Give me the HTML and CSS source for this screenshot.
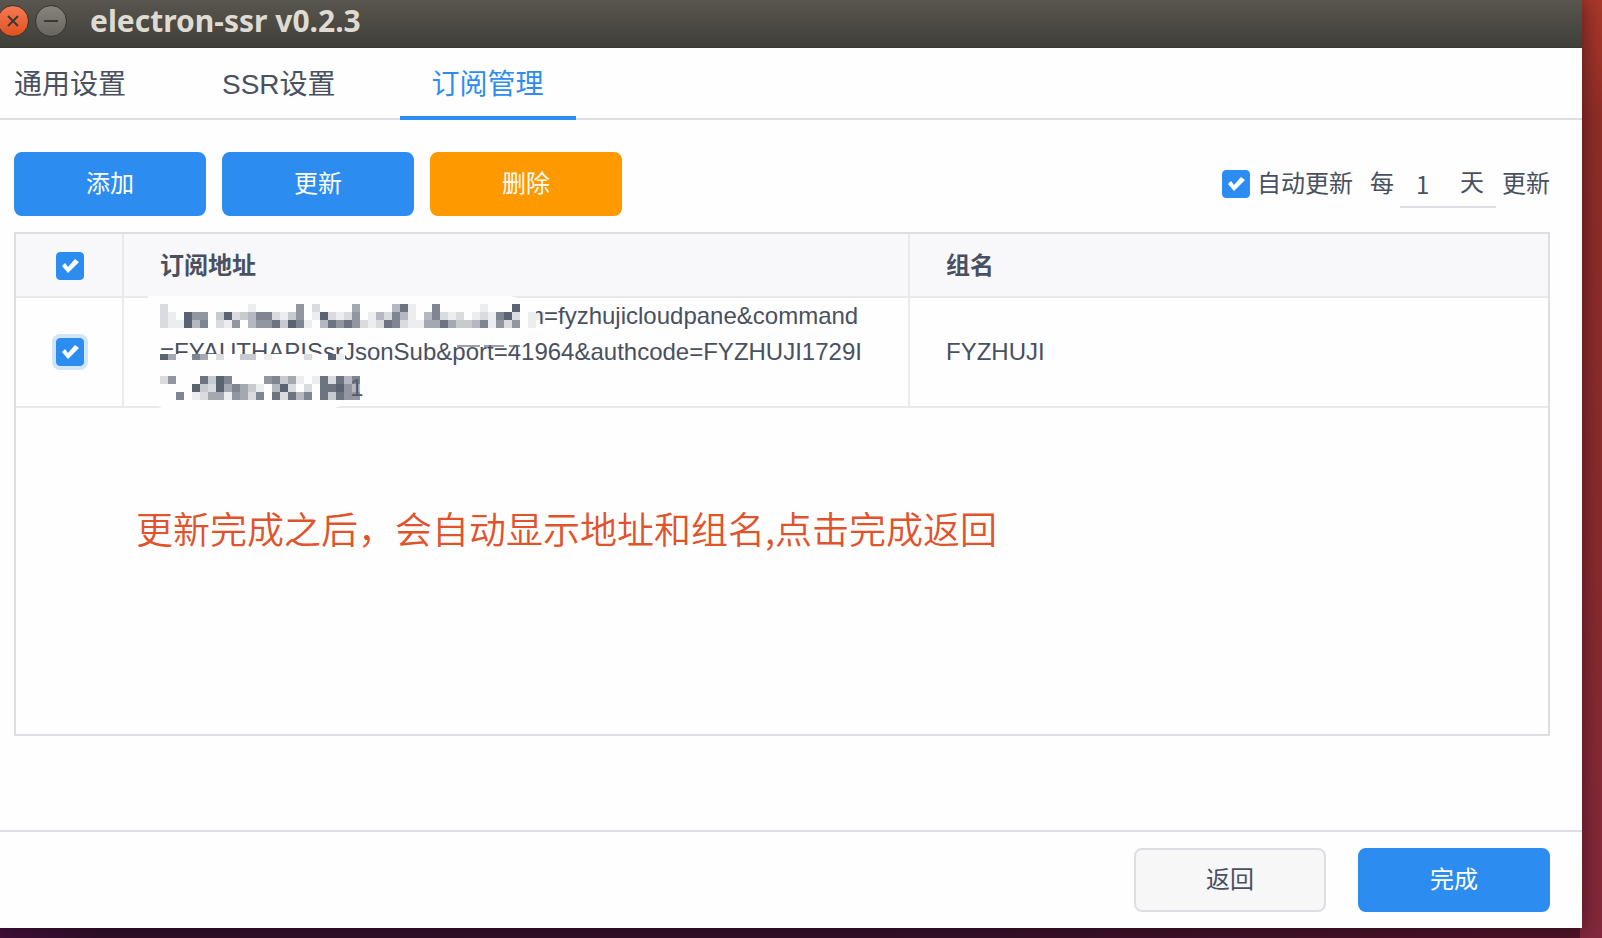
FILE: index.html
```html
<!DOCTYPE html>
<html lang="zh-CN">
<head>
    <meta charset="UTF-8">
    <meta name="viewport" content="width=device-width, initial-scale=1.0">
    <title>electron-ssr v0.2.3</title>
    <link rel="stylesheet" href="styles.css">
</head>
<body>

    <div class="window">
        <!-- Title Bar -->
        <header class="titlebar">
            <button class="control close" type="button" aria-label="关闭">
                <svg width="30" height="30" viewBox="0 0 30 30"><path d="M10 10 L20 20 M20 10 L10 20"/></svg>
            </button>
            <button class="control minimize" type="button" aria-label="最小化">
                <svg width="30" height="30" viewBox="0 0 30 30"><path d="M8 15 H22"/></svg>
            </button>
            <h1>electron-ssr v0.2.3</h1>
        </header>

        <!-- Tabs -->
        <nav class="tabs">
            <button class="tab" type="button">通用设置</button>
            <button class="tab" type="button">SSR设置</button>
            <button class="tab active" type="button">订阅管理</button>
        </nav>

        <!-- Subscriptions -->
        <main>
            <div class="toolbar">
                <button class="button primary" type="button">添加</button>
                <button class="button primary" type="button">更新</button>
                <button class="button warning" type="button">删除</button>
                <div class="auto-update">
                    <label class="auto-label"><input class="checkbox" type="checkbox" checked><span class="text">自动更新</span></label>
                    <label class="text" for="interval">每</label>
                    <span class="interval">
                        <input id="interval" type="text" value="1">
                        <span class="text">天</span>
                    </span>
                    <span class="text">更新</span>
                </div>
            </div>

            <div class="table-box">
                <table>
                    <thead>
                        <tr>
                            <th class="col-check"><input class="checkbox" type="checkbox" aria-label="全选" checked></th>
                            <th class="col-url">订阅地址</th>
                            <th>组名</th>
                        </tr>
                    </thead>
                    <tbody>
                        <tr>
                            <td class="col-check"><input class="checkbox focused" type="checkbox" aria-label="选择" checked></td>
                            <td class="col-url">
                                <div class="line-first">m=fyzhujicloudpane&amp;command</div>
                                <div>=FYAUTHAPISsrJsonSub&amp;port=41964&amp;authcode=FYZHUJI1729I</div>
                                <div class="line-last">1</div>
                                <svg class="mosaic" width="400" height="114" viewBox="0 0 400 114" aria-hidden="true">
                                    <path class="cover" d="M0 0 H362 L378 4 H388 V36 H0 Z"/>
                                    <path class="cover" d="M309 44 H372 V49 H309 Z"/>
                                    <path class="cover" d="M6 58 H197 V76 H204 V98 L196 108 L182 114 H18 L6 108 Z"/>
                                    <path class="smudge" d="M309 49 H332 V51 H309 Z M336 49 H356 V51 H336 Z M361 49 H372 V51 H361 Z"/>
                                </svg>
                            </td>
                            <td>FYZHUJI</td>
                        </tr>
                    </tbody>
                </table>
                <p class="note">更新完成之后，会自动显示地址和组名,点击完成返回</p>
            </div>
        </main>

        <!-- Footer -->
        <footer>
            <button class="button default" type="button">返回</button>
            <button class="button primary" type="button">完成</button>
        </footer>
    </div>

    <script src="mosaic.js"></script>
</body>
</html>
```

FILE: styles.css
```css
* {
    box-sizing: border-box;
}
body {
    margin: 0;
    min-height: 100vh;
    padding: 0 20px 10px 0;
    display: flex;
    background: linear-gradient(to right, #41103c 0, #2f102a 100px, #35102a 60%, #501428 1580px, transparent 1580px) bottom / 100% 10px no-repeat,
        linear-gradient(to bottom, #aa3829 0, #8f2e27 120px, #8a2b2e 60%, #83283c 100%);
    color: #495060;
    font-family: "Liberation Sans", "Noto Sans CJK SC", sans-serif;
    font-size: 24px;
}
h1, p {
    margin: 0;
}
button {
    font-family: inherit;
    cursor: pointer;
}
.window {
    flex: 1;
    display: flex;
    flex-direction: column;
    background-color: #fefefe;
    box-shadow: 0 0 20px rgba(30, 5, 20, 0.6);
}

/* title bar */
.titlebar {
    height: 48px;
    padding-bottom: 5px;
    display: flex;
    align-items: center;
    background: linear-gradient(#59564e, #3f3e39);
    border-bottom: 1px solid #383733;
}
.titlebar h1 {
    margin-left: 23px;
    color: #dfdbd2;
    font-family: "Noto Sans", sans-serif;
    font-size: 30px;
    line-height: 40px;
    font-weight: bold;
}
.control {
    width: 32px;
    height: 32px;
    padding: 0;
    border: 1px solid #35332f;
    border-radius: 50%;
}
.control svg {
    display: block;
    fill: none;
    stroke: #3b3934;
    stroke-width: 2;
}
.close {
    margin-left: -3px;
    margin-right: 6px;
    background: linear-gradient(#f47a54, #e3501f);
}
.minimize {
    background: linear-gradient(#86847c, #67655e);
}

/* tabs */
.tabs {
    height: 72px;
    margin-bottom: 32px;
    display: flex;
    gap: 32px;
    border-bottom: 2px solid #dddee1;
}
.tab {
    height: 72px;
    padding: 0 32px;
    border: none;
    border-bottom: 4px solid transparent;
    background: none;
    color: #495060;
    font-size: 28px;
}
.tab:first-child {
    margin-left: -18px;
}
.tab.active {
    color: #2d8cf0;
    border-bottom-color: #2d8cf0;
}

/* content */
main {
    flex: 1;
    display: flex;
    flex-direction: column;
    padding: 0 32px 94px 14px;
}
.toolbar {
    display: flex;
    align-items: center;
    gap: 16px;
    margin-bottom: 16px;
}
.button {
    width: 192px;
    height: 64px;
    padding: 0 0 6px;
    border: 2px solid transparent;
    border-radius: 8px;
    color: #fff;
    font-size: 24px;
}
.primary {
    background-color: #2d8cf0;
    border-color: #2d8cf0;
}
.warning {
    background-color: #f90;
    border-color: #f90;
}
.default {
    background-color: #f7f7f7;
    border-color: #dddee1;
    color: #495060;
}
.auto-update {
    margin-left: auto;
    display: flex;
    align-items: center;
    gap: 6px;
}
.text {
    padding-bottom: 5px;
}
.auto-label {
    display: flex;
    align-items: center;
    gap: 7px;
    margin-right: 11px;
}
.interval {
    width: 96px;
    height: 48px;
    padding: 0 12px 0 16px;
    display: flex;
    align-items: center;
    justify-content: space-between;
    border-bottom: 2px solid #dddee1;
}
.interval input {
    width: 32px;
    padding: 0;
    border: none;
    outline: none;
    background: none;
    color: inherit;
    font-family: "Noto Sans CJK SC", sans-serif;
    font-size: 24px;
}

/* checkboxes */
.checkbox {
    appearance: none;
    width: 28px;
    height: 28px;
    margin: 0;
    display: block;
    border: 1px solid #dddee1;
    border-radius: 4px;
}
.checkbox:checked {
    border-color: #2d8cf0;
    background-color: #2d8cf0;
}
.checkbox:checked::after {
    content: "";
    display: block;
    width: 26px;
    height: 26px;
    background-color: #fff;
    clip-path: polygon(5px 13px, 8px 10px, 11px 14px, 18px 6px, 22px 9px, 11px 20px);
}
.checkbox.focused {
    box-shadow: 0 0 0 4px #d0e5fc;
}

/* table */
.table-box {
    flex: 1;
    border: 2px solid #dddee1;
}
table {
    width: 100%;
    table-layout: fixed;
    border-collapse: separate;
    border-spacing: 0;
}
th, td {
    padding: 0 36px;
    border-right: 2px solid #e9eaec;
    border-bottom: 2px solid #e9eaec;
    text-align: left;
    line-height: 36px;
}
th {
    height: 64px;
    padding-top: 2px;
    background-color: #f8f8fa;
}
td {
    height: 110px;
}
th:last-child, td:last-child {
    border-right: none;
}
.col-check {
    width: 108px;
    padding-left: 40px;
}
.col-url {
    width: 786px;
    position: relative;
    white-space: nowrap;
}
.line-first {
    padding-left: 364px;
}
.line-last {
    padding-left: 190px;
}

/* pixelated part of the address */
.mosaic {
    position: absolute;
    top: -2px;
    left: 24px;
    fill: #5b6272;
}
.mosaic .cover {
    fill: #fefefe;
}
.mosaic .smudge {
    opacity: 0.6;
}
.note {
    padding: 92px 120px 0;
    color: #e0532c;
    font-family: "Noto Sans CJK SC", sans-serif;
    font-size: 37px;
    font-weight: 350;
    line-height: 56px;
}

/* footer */
footer {
    display: flex;
    justify-content: flex-end;
    gap: 32px;
    padding: 16px 32px;
    border-top: 2px solid #dddee1;
}
```

FILE: mosaic.js
```javascript
// one digit per 8px block, 0 = empty, 9 = darkest
const CELL = 8;
const rows = [
    { y: 8, h: 8, cells: '200000000001000006020000500004810070000010009' },
    { y: 16, h: 8, cells: '210966039234772136019212601427410472120121792011' },
    { y: 24, h: 8, cells: '21194702160466839710486862128721155853347162601' },
    { y: 58, h: 6, cells: '95007502003301000020091' },
    { y: 80, h: 8, cells: '2600083970000673510182847' },
    { y: 88, h: 8, cells: '0000932957531049202088964' },
    { y: 96, h: 8, cells: '0070125516527082847083866' }
];

const mosaic = document.querySelector('.mosaic');

rows.forEach(row => {
    [...row.cells].forEach((level, i) => {
        if (level === '0') return;
        const rect = document.createElementNS('http://www.w3.org/2000/svg', 'rect');
        rect.setAttribute('x', 12 + i * CELL);
        rect.setAttribute('y', row.y);
        rect.setAttribute('width', CELL);
        rect.setAttribute('height', row.h);
        rect.setAttribute('opacity', level / 9);
        mosaic.appendChild(rect);
    });
});
```
